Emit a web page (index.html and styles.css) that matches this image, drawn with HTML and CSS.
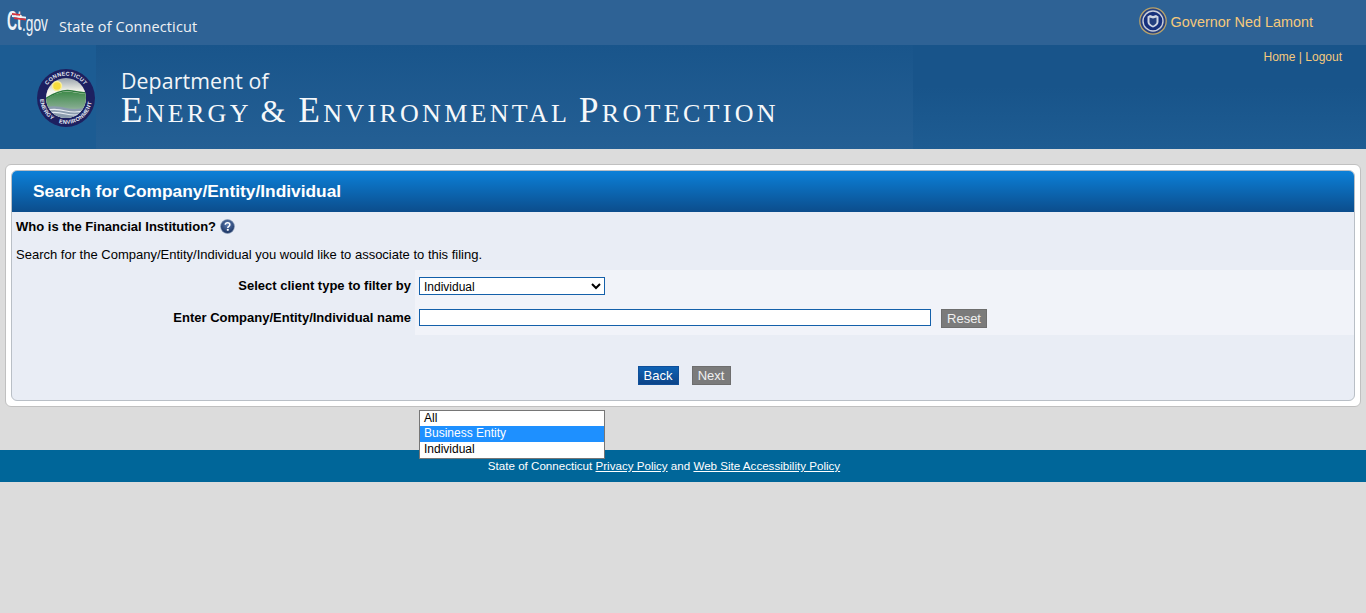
FILE: index.html
```html
<!DOCTYPE html>
<html lang="en">
<head>
<meta charset="utf-8">
<title>Search for Company/Entity/Individual</title>
<link rel="stylesheet" href="styles.css">
</head>
<body>
<header class="site-header">
  <div class="state-bar">
    <div class="state-brand">
      <span class="ct-logo"><span class="ct-mark">Ct</span><span class="ct-gov">.gov</span>
        <svg class="ct-flag" viewBox="0 0 14 8" width="14" height="8" aria-hidden="true"><path d="M0 2 14 3.700V5.800L0 4Z" fill="#f2f5f8"/><path d="M0 0 8 1V2.800L0 1.800Z" fill="#d8323c"/><path d="M2 4.300 14 5.800V7.500L2 6Z" fill="#d8323c"/></svg>
      </span>
      <span class="state-name">State of Connecticut</span>
    </div>
    <div class="governor">
      <svg class="gov-seal" viewBox="0 0 28 28" width="28" height="28" aria-hidden="true">
        <circle cx="14" cy="14" r="13.200" fill="#27407f" stroke="#b9a36a" stroke-width="1.300"/>
        <circle cx="14" cy="14" r="10" fill="#16307c" stroke="#c9cfdc" stroke-width="1.400"/>
        <path d="M8.500 9.500 11 8l3 1 3-1 2.500 1.500V15c0 2.600-2.500 4.300-5.500 5.500-3-1.200-5.500-2.900-5.500-5.500Z" fill="#cfd6e4"/>
        <path d="M10.500 10.500 14 11.500l3.500-1V15c0 1.600-1.600 2.800-3.500 3.700-1.900-.9-3.500-2.100-3.500-3.700Z" fill="#24407f"/>
      </svg>
      <span>Governor Ned Lamont</span>
    </div>
  </div>
  <div class="dept-bar">
    <div class="dept-panel">
      <svg class="dept-seal" viewBox="0 0 60 60" width="60" height="60">
        <defs>
          <clipPath id="sealClip"><circle cx="30" cy="30" r="20"/></clipPath>
          <linearGradient id="sky" x1="0" y1="0" x2="0" y2="1"><stop offset="0" stop-color="#8d98a3"/><stop offset=".35" stop-color="#f6f6ec"/><stop offset="1" stop-color="#ffffff"/></linearGradient>
          <linearGradient id="hill" x1="0" y1="0" x2="0" y2="1"><stop offset="0" stop-color="#3f8a4a"/><stop offset=".5" stop-color="#7fa98a"/><stop offset="1" stop-color="#dfe6e0"/></linearGradient>
          <path id="arcTop" d="M7.500 30a22.500 22.500 0 0 1 45 0"/>
          <path id="arcBottom" d="M4 30a26 26 0 0 0 52 0"/>
        </defs>
        <circle cx="30" cy="30" r="29" fill="#1d2060"/>
        <g clip-path="url(#sealClip)">
          <rect x="8" y="8" width="44" height="44" fill="url(#sky)"/>
          <circle cx="21" cy="18" r="4.500" fill="#f6dc3c" stroke="#f9ee9a" stroke-width="1.500"/>
          <path d="M6 34C16 26 28 22 36 24 44 26 50 25 54 27V54H6Z" fill="url(#hill)"/>
          <path d="M6 33C16 26 28 21 36 23 44 25 50 24 54 26" fill="none" stroke="#2d7a3c" stroke-width="1.500"/>
          <path d="M6 41C14 37 22 38 30 40 38 42 46 41 54 38V54H6Z" fill="#8b9cae"/>
          <path d="M6 44C14 40 22 41 30 43 38 45 46 44 54 41M6 47C14 43 22 44 30 46 38 48 46 47 54 44" fill="none" stroke="#e6ebf2" stroke-width="1.100"/>
        </g>
        <text class="seal-text"><textPath href="#arcTop" startOffset="50%" text-anchor="middle">CONNECTICUT</textPath></text>
        <text class="seal-text"><textPath href="#arcBottom" startOffset="17%" text-anchor="middle">ENERGY</textPath></text>
        <text class="seal-text"><textPath href="#arcBottom" startOffset="68%" text-anchor="middle">ENVIRONMENT</textPath></text>
      </svg>
      <div class="dept-title">
        <div class="dept-line1">Department of</div>
        <div class="dept-line2"><span class="cap">E</span>NERGY <span class="cap amp">&amp;</span> <span class="cap">E</span>NVIRONMENTAL <span class="cap">P</span>ROTECTION</div>
      </div>
    </div>
    <nav class="top-links"><a href="#">Home</a> | <a href="#">Logout</a></nav>
  </div>
</header>

<main class="card">
  <section class="panel">
    <h1 class="panel-title">Search for Company/Entity/Individual</h1>
    <div class="question">
      <strong>Who is the Financial Institution?</strong>
      <svg class="help" viewBox="0 0 16 16" width="15" height="15" role="img" aria-label="Help">
        <defs><radialGradient id="helpFill" cx=".5" cy=".35" r=".7"><stop offset="0" stop-color="#5f7fb4"/><stop offset="1" stop-color="#122a58"/></radialGradient></defs>
        <circle cx="8" cy="8" r="7.400" fill="url(#helpFill)" stroke="#8ea0bc" stroke-width=".7"/>
        <path d="M5.600 6.200C5.700 4.700 6.800 4 8.100 4c1.400 0 2.400.8 2.400 2 0 1.900-2.200 1.800-2.200 3.600" fill="none" stroke="#fff" stroke-width="1.600"/>
        <rect x="7.300" y="10.600" width="2" height="1.900" fill="#fff"/>
      </svg>
    </div>
    <p class="intro">Search for the Company/Entity/Individual you would like to associate to this filing.</p>
    <div class="form-grid">
      <label class="field-label" for="clientType">Select client type to filter by</label>
      <div class="field">
        <select id="clientType" class="select">
          <option>All</option>
          <option>Business Entity</option>
          <option selected>Individual</option>
        </select>
      </div>
      <label class="field-label" for="clientName">Enter Company/Entity/Individual name</label>
      <div class="field">
        <input id="clientName" class="text-input" type="text">
        <button class="btn btn-grey btn-reset" type="button">Reset</button>
      </div>
    </div>
    <div class="actions">
      <button class="btn btn-blue btn-back" type="button">Back</button>
      <button class="btn btn-grey btn-next" type="button">Next</button>
    </div>
  </section>
</main>

<ul class="dropdown">
  <li>All</li>
  <li class="is-active">Business Entity</li>
  <li>Individual</li>
</ul>

<footer class="site-footer">State of Connecticut <a href="#">Privacy Policy</a> and <a href="#">Web Site Accessibility Policy</a></footer>
</body>
</html>
```

FILE: styles.css
```css
* { box-sizing: border-box; }
html, body { margin: 0; padding: 0; }
body {
  background: #dcdcdc;
  font-family: "Liberation Sans", Arial, sans-serif;
  font-size: 13px;
  color: #000;
  position: relative;
  min-height: 613px;
}
.site-header { height: 149px; }
.state-bar {
  height: 45px;
  background: #2e6295;
  display: flex;
  justify-content: space-between;
  align-items: flex-start;
}
.state-brand { display: flex; align-items: center; height: 45px; padding: 0 0 0 7px; }
.ct-logo { position: relative; display: block; width: 43px; height: 30px; color: #eef3f8; white-space: nowrap; margin-top: -5px; }
.ct-mark { position: absolute; left: 0; top: 3px; font: bold 28px/26px "Liberation Sans", sans-serif; transform: scaleX(.5); transform-origin: left; }
.ct-gov { position: absolute; left: 15px; top: 6px; font: 22px/26px "Liberation Sans", sans-serif; transform: scaleX(.62); transform-origin: left; }
.ct-flag { position: absolute; left: 5px; top: 8px; }
.state-name {
  margin-left: 9px;
  font: 14.500px/1 "Open Sans", sans-serif;
  color: #eef1f4;
  letter-spacing: .1px;
  position: relative;
  top: 5px;
}
.governor {
  display: flex;
  align-items: center;
  gap: 4px;
  padding: 7px 53px 0 0;
  color: #f5c97c;
  font-size: 14.400px;
}
.governor span { position: relative; top: 1px; }
.dept-bar {
  height: 104px;
  background: linear-gradient(#18548a, #18548a 40%, #1e5c92);
  display: flex;
  justify-content: space-between;
}
.dept-panel {
  width: 913px;
  padding-left: 36px;
  display: flex;
  background:
    linear-gradient(90deg, #1c5c93 0, #1c5c93 96px, rgba(28,92,147,0) 96px),
    linear-gradient(#19558b, #245f94);
}
.dept-seal { margin-top: 23px; flex: none; }
.seal-text { font: bold 5.500px "Liberation Sans", sans-serif; fill: #e8ecf4; letter-spacing: .3px; }
.dept-title { margin-left: 25px; color: #fff; }
.dept-line1 { font: 21.300px/24px "Open Sans", sans-serif; margin-top: 24px; letter-spacing: .1px; color: #f2f5f8; }
.dept-line2 {
  font: 26px/36px "Liberation Serif", serif;
  letter-spacing: 3.300px;
  white-space: nowrap;
  color: #f6f8fa;
}
.cap { font-size: 35px; }
.amp { font-size: 32px; }
.top-links { padding: 5px 24px 0 0; color: #f5c97c; font-size: 12px; line-height: 14px; }
.top-links a { color: #f5c97c; text-decoration: none; }

.card {
  margin: 15px 5px 0;
  height: 243px;
  padding: 5px;
  background: #fff;
  border: 1px solid #c0c0c0;
  border-radius: 6px;
}
.panel {
  height: 231px;
  background: #e9edf5;
  border: 1px solid #b9bfc6;
  border-radius: 6px;
}
.panel-title {
  margin: 0;
  height: 41px;
  padding-left: 21px;
  font-size: 17.330px;
  line-height: 41px;
  color: #fff;
  background: linear-gradient(#0c80d8, #0c4d8c);
  border-radius: 5px 5px 0 0;
}
.question { display: flex; align-items: center; gap: 4px; height: 29px; padding-left: 4px; }
.help { flex: none; }
.intro { margin: 0; height: 29px; padding: 6px 0 0 4px; line-height: 15px; }
.form-grid {
  display: grid;
  grid-template-columns: 403px 1fr;
  grid-template-rows: 32px 33px;
  background: linear-gradient(90deg, transparent 403px, #f1f3f9 403px);
}
.field-label {
  font-weight: bold;
  text-align: right;
  line-height: 15px;
  padding: 8px 4px 0 0;
}
.field { display: flex; align-items: flex-start; padding: 7px 0 0 4px; }
.select {
  width: 186px;
  height: 18px;
  font: 12px "Liberation Sans", sans-serif;
  border: 1px solid #1460aa;
  border-radius: 0;
  background: #fff;
  padding: 1px 0 0;
}
.text-input {
  width: 512px;
  height: 17px;
  border: 1px solid #1460aa;
  border-radius: 0;
  background: #fff;
  padding: 0;
}
.btn {
  height: 19px;
  padding: 0;
  font: 13px/16px "Liberation Sans", sans-serif;
  color: #f0f0f0;
  border: 1px solid #6e6e6e;
  border-radius: 0;
}
.btn-grey { background: #7b7b7b; }
.btn-blue { background: linear-gradient(#0e62b4, #0c4488); border-color: #0f4f99; color: #fff; }
.btn-reset { margin-left: 10px; width: 46px; }
.btn-back { width: 41px; }
.btn-next { width: 39px; }
.actions { display: flex; justify-content: center; gap: 13px; padding: 31px 0 0 0; margin-left: 2px; }

.dropdown {
  position: absolute;
  left: 419px;
  top: 410px;
  width: 186px;
  height: 49px;
  margin: 0;
  padding: 0;
  list-style: none;
  background: #fff;
  border: 1px solid #767676;
  z-index: 2;
  font-size: 12px;
  line-height: 15px;
}
.dropdown li { padding-left: 4px; height: 16px; }
.dropdown li:first-child { height: 15px; }
.dropdown .is-active { background: #1e90ff; color: #fff; }

.site-footer {
  margin-top: 43px;
  height: 32px;
  background: #006699;
  color: #fff;
  font-size: 11.600px;
  text-align: center;
  line-height: 32px;
  padding-right: 38px;
}
.site-footer a { color: #fff; }
```
